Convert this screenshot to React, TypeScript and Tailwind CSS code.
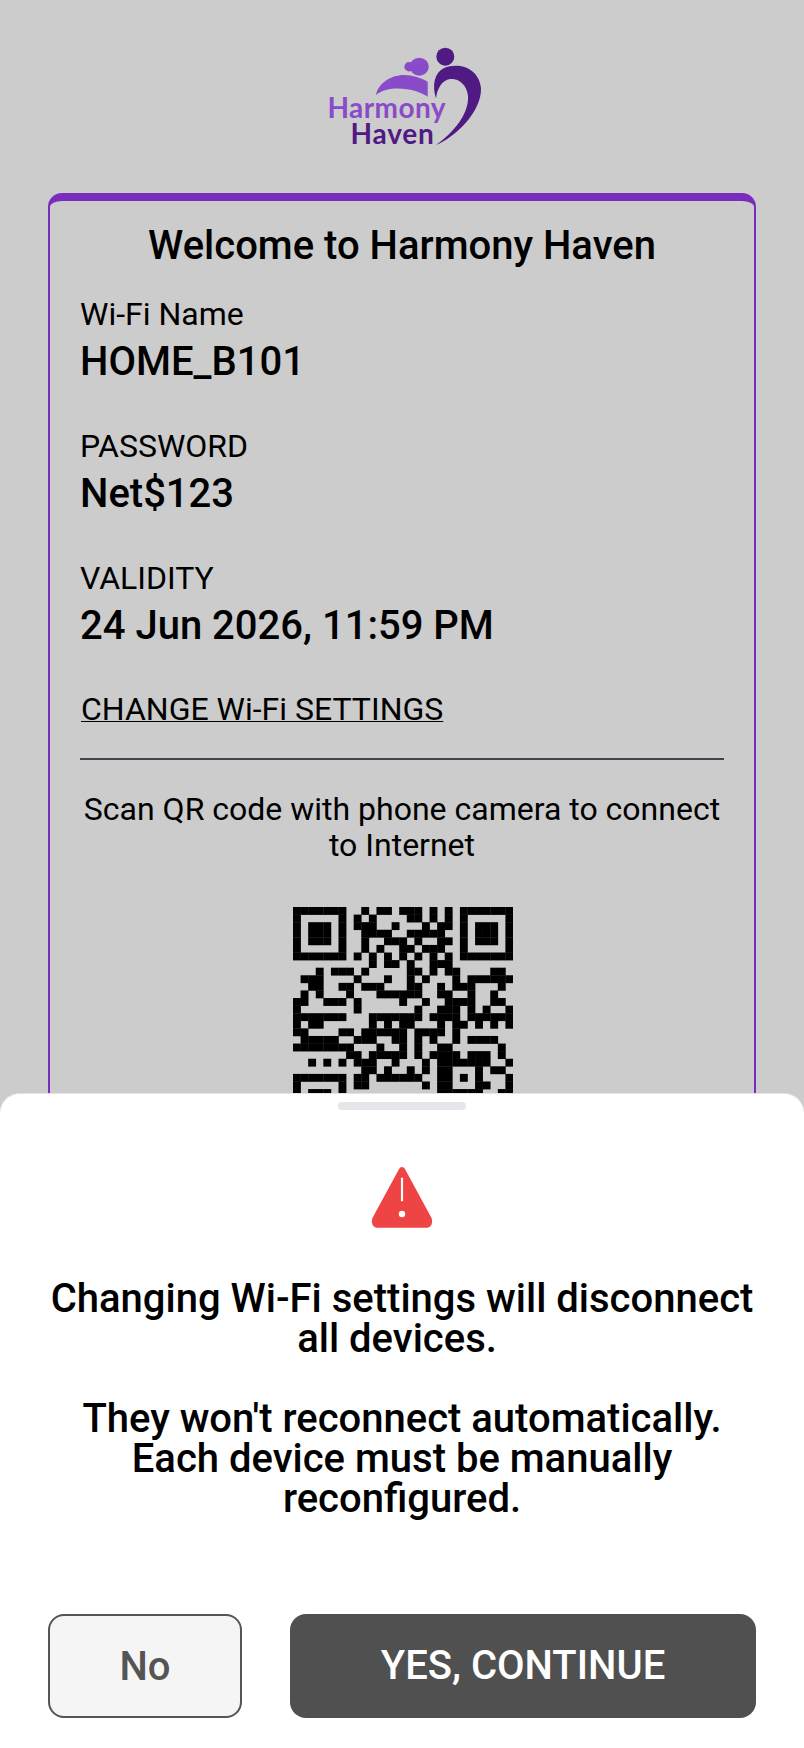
const qrRows: number[][] = [
  [0, 1, 2, 3, 4, 5, 6, 9, 11, 12, 14, 15, 16, 18, 20, 22, 23, 24, 25, 26, 27, 28],
  [0, 6, 8, 10, 15, 16, 18, 20, 22, 28],
  [0, 2, 3, 4, 6, 8, 9, 10, 13, 17, 19, 20, 22, 24, 25, 26, 28],
  [0, 2, 3, 4, 6, 9, 10, 11, 12, 15, 16, 17, 18, 19, 22, 24, 25, 26, 28],
  [0, 2, 3, 4, 6, 9, 12, 13, 14, 16, 19, 20, 22, 24, 25, 26, 28],
  [0, 6, 9, 11, 14, 15, 17, 18, 19, 22, 28],
  [0, 1, 2, 3, 4, 5, 6, 8, 10, 12, 14, 16, 18, 20, 22, 23, 24, 25, 26, 27, 28],
  [10, 12, 13, 15, 18, 19, 20],
  [3, 5, 6, 7, 9, 15, 16, 18, 20, 21, 26, 27],
  [1, 2, 3, 8, 12, 15, 17, 21, 23, 24, 25, 26, 27, 28],
  [2, 3, 6, 7, 9, 10, 11, 15, 16, 19, 21, 22, 23, 27],
  [1, 3, 7, 11, 12, 13, 14, 15, 16, 19, 20, 23, 26],
  [0, 1, 4, 5, 6, 8, 14, 17, 20, 21, 22, 23, 26, 27],
  [0, 8, 16, 19, 20, 21, 23, 25, 28],
  [0, 1, 2, 3, 4, 5, 6, 10, 11, 12, 13, 14, 15, 16, 18, 19, 20, 21, 23, 24, 25, 26, 27, 28],
  [0, 2, 3, 10, 12, 14, 15, 19, 21, 22, 24, 26, 28],
  [0, 1, 6, 7, 9, 10, 11, 12, 13, 14, 16, 17, 18, 19, 21],
  [1, 2, 3, 4, 5, 8, 9, 10, 13, 14, 16, 18, 21, 23, 24, 25, 26],
  [0, 1, 2, 3, 4, 5, 6, 7, 11, 14, 16, 19, 20, 27],
  [7, 8, 10, 11, 12, 13, 14, 16, 18, 19, 20, 21, 23, 24, 25, 27],
  [2, 4, 6, 8, 9, 10, 13, 17, 19, 20, 21, 22, 23, 24, 25, 28],
  [9, 10, 12, 15, 17, 19, 20, 24, 26, 27],
  [0, 1, 2, 3, 4, 5, 6, 8, 9, 11, 12, 13, 14, 15, 16, 19, 20, 22, 24, 28],
  [0, 6, 8, 9, 17, 19, 20, 24, 25, 28],
  [0, 2, 3, 4, 6, 19, 20, 21, 22, 23, 24, 27, 28],
]

function Logo() {
  return (
    <svg width="160" height="104" viewBox="0 0 160 104" className="block">
      <circle cx="121.300" cy="10.700" r="9" fill="#4f1a84" />
      <ellipse cx="95.300" cy="20.700" rx="9.500" ry="9" fill="#8a4bc8" />
      <ellipse cx="85.300" cy="20.700" rx="5" ry="4.700" fill="#8a4bc8" />
      <path d="M52 49C54 38 66 29 80 29C89 29 97 32 103.700 35.700L103.700 50.700C92 43 66 38 52 49Z" fill="#8a4bc8" />
      <path
        d="M112 52.500C108 40 110 27 120 22C135 16 155 22 157 42C158 66 130 92 112 99C130 86 145 68 144 50C143 38 134 32 126 33C118 34 113 43 112 52.500Z"
        fill="#4f1a84"
      />
      <text x="3.500" y="72" fontFamily="Lato, sans-serif" fontWeight="700" fontSize="28" letterSpacing="0.4" fill="#8a4bc8">
        Harmony
      </text>
      <text x="26.500" y="98" fontFamily="Lato, sans-serif" fontWeight="700" fontSize="28" letterSpacing="0.8" fill="#4f1a84">
        Haven
      </text>
    </svg>
  )
}

function QrCode() {
  return (
    <svg width="220" height="220" viewBox="0 0 29 29" className="block">
      {qrRows.map((row, y) =>
        row.map((x) => <rect key={`${x}-${y}`} x={x} y={y} width="1.040" height="1.040" fill="#000" />)
      )}
    </svg>
  )
}

function WarningIcon() {
  return (
    <svg width="66" height="66" viewBox="0 0 62 62" className="block">
      <path
        d="M31 5L56 51Q57.500 56 53 56L9 56Q4.500 56 6 51Z"
        fill="#ef4444"
        stroke="#ef4444"
        strokeWidth="6"
        strokeLinejoin="round"
      />
      <rect x="30" y="12" width="2" height="22" fill="#fff" />
      <circle cx="31" cy="46" r="3" fill="#fff" />
    </svg>
  )
}

function Field({ label, value }: { label: string; value: string }) {
  return (
    <div className="mb-[37px]">
      <div className="text-[32px] leading-[42px] text-black">{label}</div>
      <div className="mt-px text-[40px] leading-[52px] font-medium text-black">{value}</div>
    </div>
  )
}

export default function App() {
  return (
    <div className="relative h-[1748px] w-[804px] overflow-hidden bg-[#cccccc] font-['Roboto',sans-serif]">
      <div className="flex justify-center pt-[46px] pb-[43px] pl-[3px]">
        <Logo />
      </div>

      <div className="mx-[48px] h-[1000px] rounded-[14px] border-2 border-t-8 border-[#7a2cbd] px-[30px]">
        <h1 className="pt-[20px] pb-[22px] text-center text-[40px] leading-[50px] font-medium text-black">
          Welcome to Harmony Haven
        </h1>
        <Field label="Wi-Fi Name" value="HOME_B101" />
        <Field label="PASSWORD" value="Net$123" />
        <Field label="VALIDITY" value="24 Jun 2026, 11:59 PM" />
        <a className="mt-px ml-px block text-[32px] leading-[40px] text-black underline decoration-1">
          CHANGE Wi-Fi SETTINGS
        </a>
        <div className="mt-[29px] h-[2px] bg-[#40444f]" />
        <p className="mt-[31px] text-center text-[32px] leading-[36px] text-black">
          Scan QR code with phone camera to connect to Internet
        </p>
        <div className="mt-[44px] flex justify-center pl-[2px]">
          <QrCode />
        </div>
      </div>

      <div className="absolute inset-x-0 bottom-0 h-[655px] rounded-t-[20px] border-t border-[#e4e4e8] bg-white px-[48px]">
        <div className="mx-auto mt-[8px] h-[8px] w-[128px] rounded-full bg-[#e5e5ea]" />
        <div className="mt-[55px] flex justify-center">
          <WarningIcon />
        </div>
        <p className="mt-[48px] text-center text-[40px] leading-[40px] font-medium text-black">
          Changing Wi-Fi settings will disconnect all devices.{'\u00a0'}
        </p>
        <p className="mt-[40px] text-center text-[40px] leading-[40px] font-medium text-black">
          They won't reconnect automatically. Each device must be manually reconfigured.
        </p>
        <div className="mt-[95px] flex gap-[48px]">
          <button className="h-[104px] w-[194px] rounded-[16px] border-2 border-[#555555] bg-[#f5f5f5] pt-[2px] text-[40px] font-medium text-[#555555]">
            No
          </button>
          <button className="h-[104px] flex-1 rounded-[16px] bg-[#505050] text-[40px] font-medium text-white">
            YES, CONTINUE
          </button>
        </div>
      </div>
    </div>
  )
}
